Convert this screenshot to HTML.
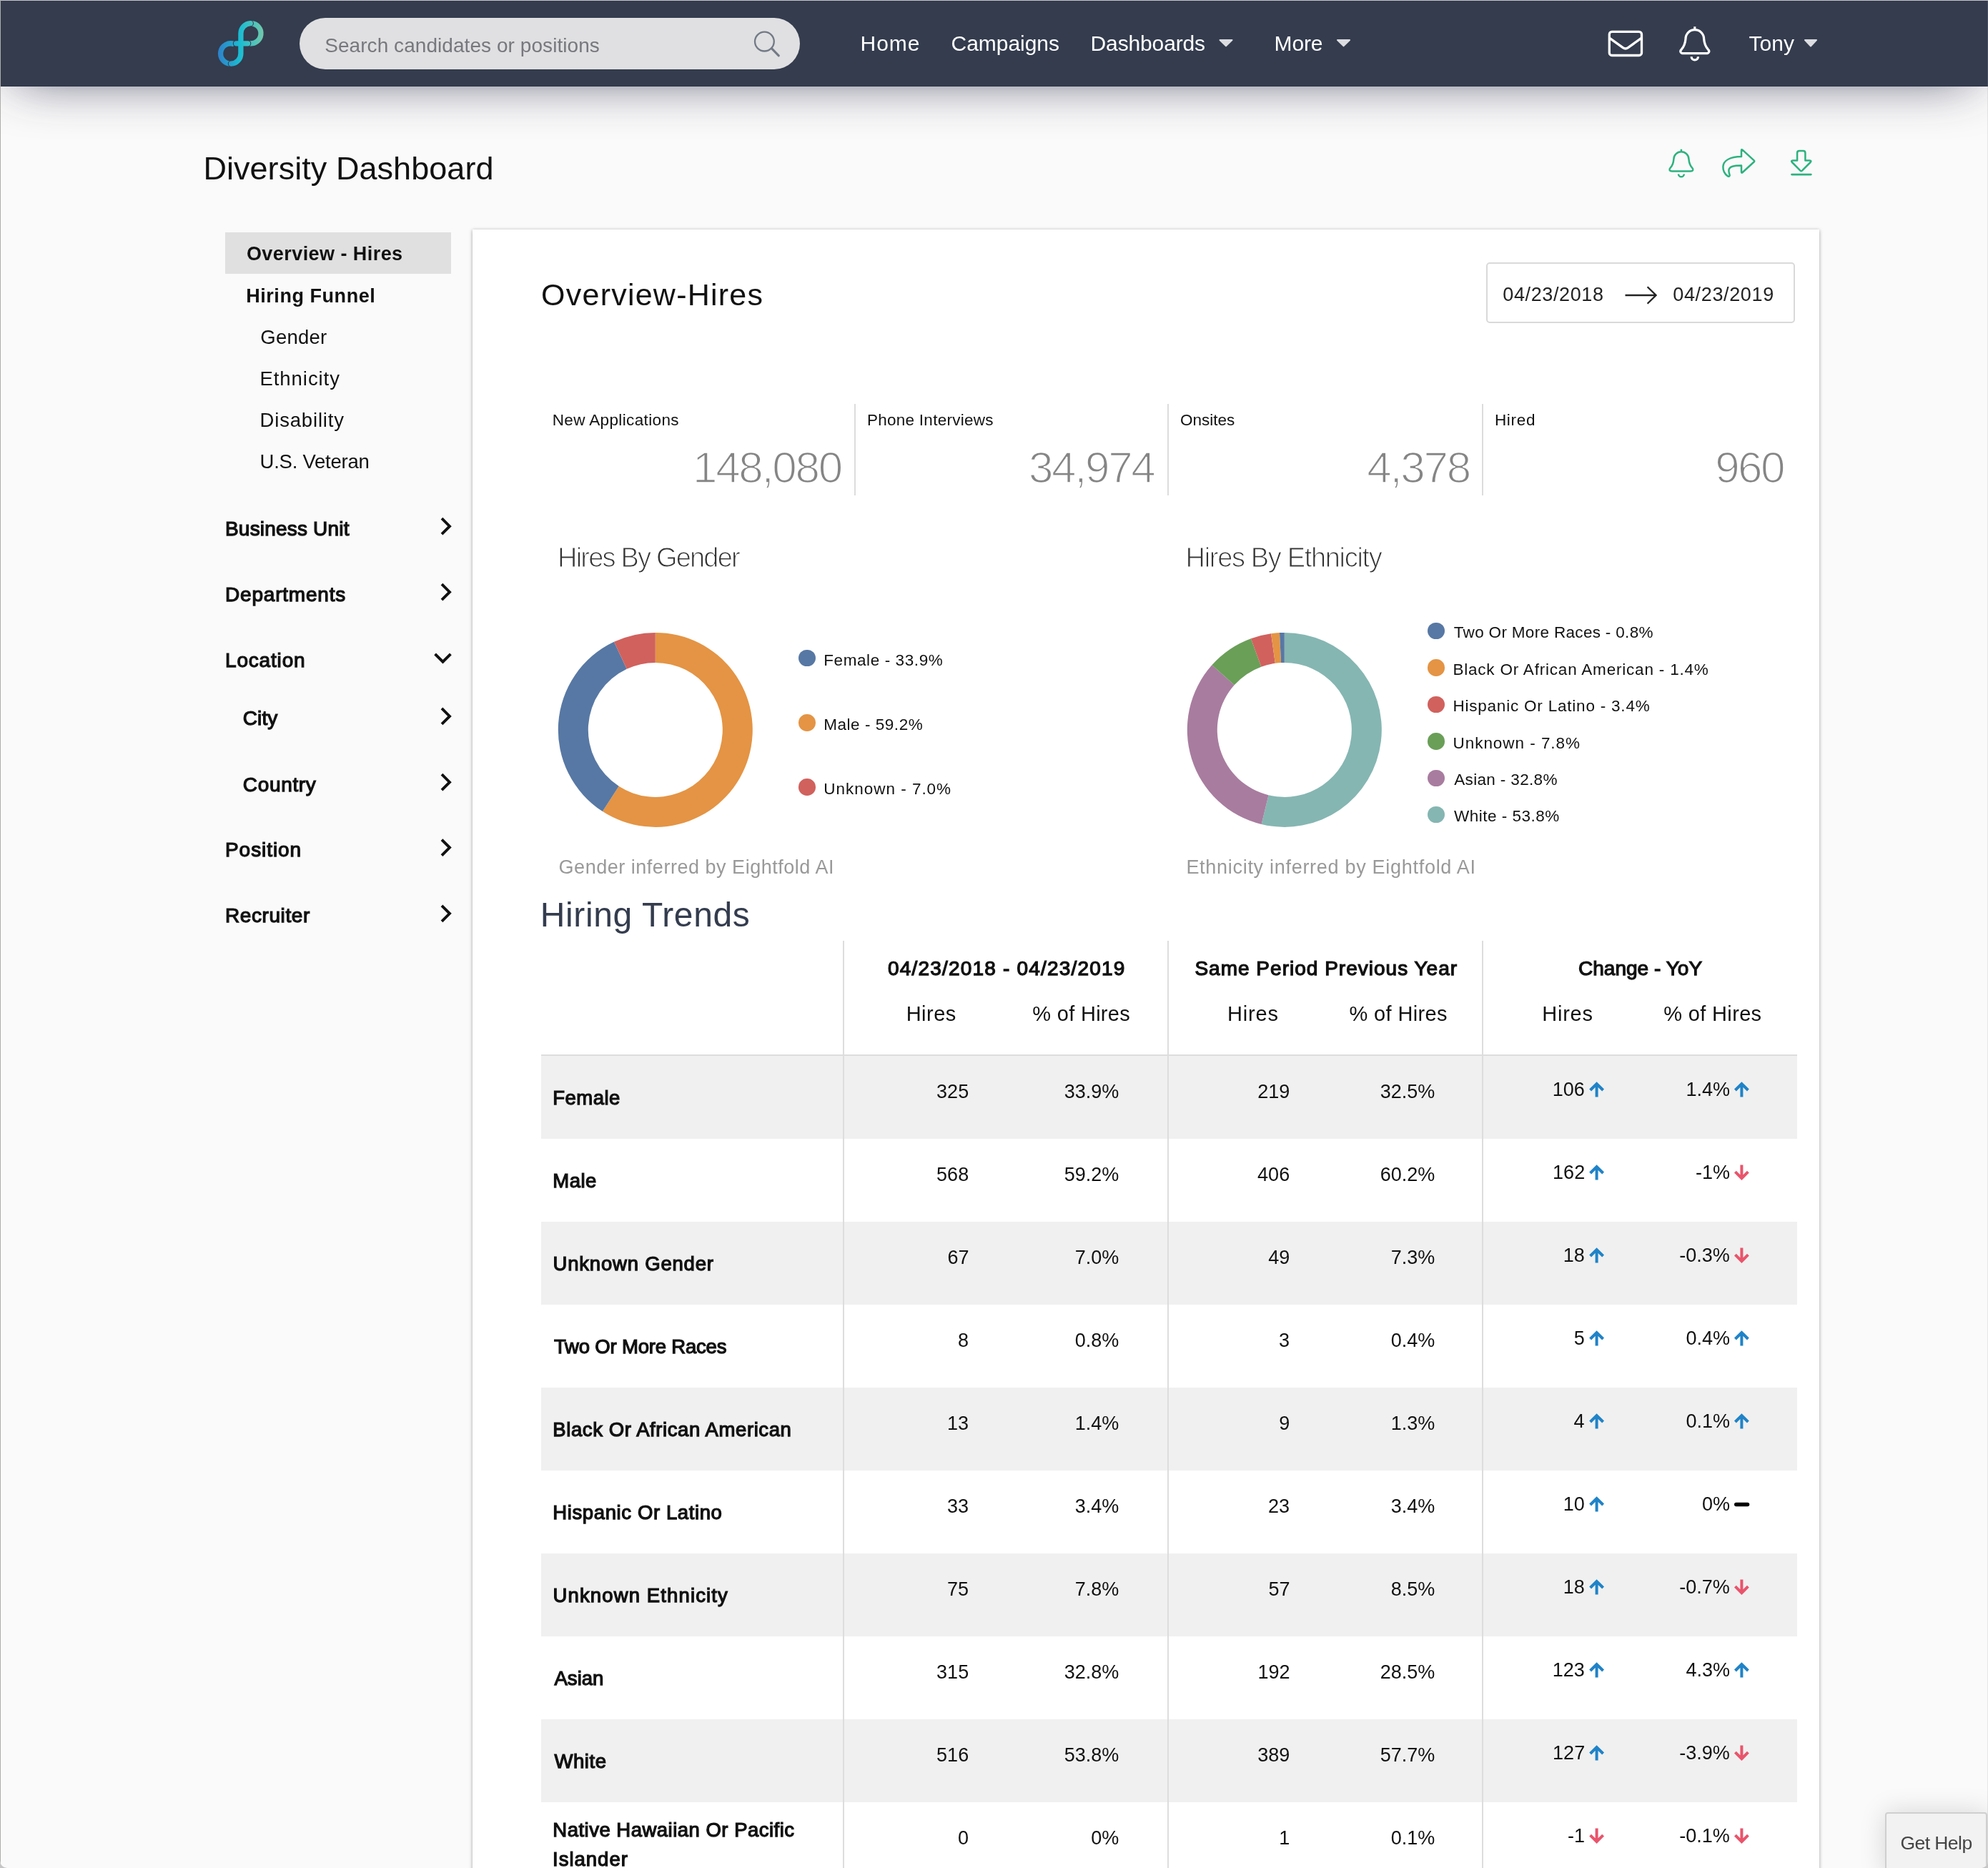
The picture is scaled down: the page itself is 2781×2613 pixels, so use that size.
<!DOCTYPE html>
<html lang="en"><head><meta charset="utf-8"><title>Diversity Dashboard</title>
<style>
html,body{margin:0;padding:0}
body{width:2781px;height:2613px;overflow:hidden;background:#c6c6c6;position:relative;font-family:"Liberation Sans",sans-serif;color:#111}
.t{position:absolute;white-space:nowrap;margin:0;padding:0;font-weight:400}
svg{position:absolute;left:0;top:0;overflow:visible}
header{position:absolute;left:0;top:0;width:2781px;height:121px;box-sizing:border-box;border-bottom:1px solid #2d3447;background:#343c4e;box-shadow:0 10px 73px -24px rgba(38,38,70,.87);z-index:5}
.search{position:absolute;left:419px;top:25px;width:700px;height:72px;border-radius:36px;background:#e0e0e2}
nav a{color:#fff;text-decoration:none}
.frame{position:absolute;z-index:9;pointer-events:none}
aside .sel{position:absolute;left:315px;top:325px;width:316px;height:58px;background:#e0e0e0}
main{position:absolute;left:661px;top:321px;width:1884px;height:2400px;background:#fff;box-shadow:0 1px 5px rgba(0,0,0,.36)}
.vdiv{position:absolute;width:2px;background:#dcdcdc}
.datebox{position:absolute;box-sizing:border-box;border:2px solid #d9d9d9;border-radius:5px;background:#fff}
table{border-collapse:collapse;table-layout:fixed}
td,th{padding:0;border:0}
tbody tr{height:116px}
tbody tr:nth-child(odd){background:#f0f0f0}
tbody tr:first-child{height:117px}
.bl{border-left:2px solid #ddd}
thead tr.h2 th{border-bottom:2px solid #ddd}
.dot{position:absolute;width:23.5px;height:23.5px;border-radius:50%}
.help{position:absolute;left:2637px;top:2535px;width:143px;height:90px;box-sizing:border-box;border:2px solid #cfcfcf;border-radius:4px;background:#f2f2f2;box-shadow:0 0 36px rgba(0,0,0,.15);z-index:6}
#app{position:absolute;left:0;top:0;width:2781px;height:2613px;will-change:transform;overflow:hidden;background:#fafafa;border-radius:0 0 10px 10px}
</style></head><body><div id="app">

<header>
<svg width="85" height="85" viewBox="0 0 85 85" style="left:295px;top:20px"><defs><linearGradient id="lg" gradientUnits="userSpaceOnUse" x1="9" y1="0" x2="74" y2="0"><stop offset="0" stop-color="#2f7fc9"/><stop offset=".5" stop-color="#1bbdd1"/><stop offset="1" stop-color="#74c8aa"/></linearGradient></defs><g fill="none" stroke="url(#lg)" stroke-width="7.3"><path d="M32.54,41.70A14.15,14.15 0 1 0 27.21,69.14"/><path d="M57.23,12.75A14.1,14.1 0 1 1 53.55,40.69"/><path d="M28.44,69.13A14.15,14.15 0 0 0 41.87,55L41.9,26.8A14.1,14.1 0 0 1 55.26,12.72M35.5,40.85L51.6,40.85" stroke="#343c4e" stroke-width="9.4" stroke-linecap="round"/><path d="M28.44,69.13A14.15,14.15 0 0 0 41.87,55L41.9,26.8A14.1,14.1 0 0 1 55.26,12.72M35.5,40.85L51.6,40.85" stroke-linecap="round"/></g></svg>
<div class="search"></div>
<span class="t" style="left:454.2px;top:46.5px;font-size:28px;line-height:34px;letter-spacing:0.06px;color:#77787d;">Search candidates or positions</span>
<svg width="60" height="60" viewBox="1045 35 60 60" style="left:1045px;top:35px"><g fill="none" stroke="#737a86"><circle cx="1069.4" cy="58.1" r="13.4" stroke-width="2.3"/><path d="M1079.6,67.9L1089.3,77.9" stroke-width="3.1" stroke-linecap="round"/></g></svg>
<nav>
<a class="t" style="left:1203.6px;top:43.1px;font-size:30px;line-height:36px;letter-spacing:0.93px;color:#fff;">Home</a>
<a class="t" style="left:1330.5px;top:43.1px;font-size:30px;line-height:36px;letter-spacing:-0.03px;color:#fff;">Campaigns</a>
<a class="t" style="left:1525.6px;top:43.1px;font-size:30px;line-height:36px;letter-spacing:-0.14px;color:#fff;">Dashboards</a>
<a class="t" style="left:1782.6px;top:43.1px;font-size:30px;line-height:36px;letter-spacing:-0.17px;color:#fff;">More</a>
<a class="t" style="left:2446.4px;top:43.1px;font-size:30px;line-height:36px;letter-spacing:0.10px;color:#fff;">Tony</a>
</nav>
<svg width="2781" height="121" viewBox="0 0 2781 121"><g fill="#dcdde1" stroke="#dcdde1" stroke-width="2" stroke-linejoin="round"><path d="M1706.5,56L1723.5,56L1715.0,64.39999999999999Z"/><path d="M1871.0,56L1888.0,56L1879.5,64.39999999999999Z"/><path d="M2525.0,56L2541.0,56L2533.0,64.6Z"/></g>
<g fill="none" stroke="#fff" stroke-width="3.3" stroke-linejoin="round" stroke-linecap="round"><rect x="2251.3" y="44.4" width="45.2" height="33.1" rx="3.6"/><path d="M2251.8,53.4L2270.6,66.9Q2273.9,69.2 2277.2,66.9L2296,53.4"/></g>
<path d="M2355.00,74.70L2386.60,74.70C2390.60,74.70 2392.10,71.90 2389.60,69.40C2385.40,64.90 2384.10,60.70 2383.60,54.40A12.80,12.80 0 0 0 2358.00,54.40C2357.50,60.70 2356.20,64.90 2352.00,69.40C2349.50,71.90 2351.00,74.70 2355.00,74.70ZM2370.80,37.30L2370.80,41.20M2366.10,79.30A4.70,4.70 0 0 0 2375.50,79.30" fill="none" stroke="#fff" stroke-width="3.2" stroke-linejoin="round"/>
</svg>
</header>
<div class="frame" style="left:0;top:0;width:2781px;height:1px;background:#c9c8ca"></div>
<div class="frame" style="left:0;top:0;width:1px;height:2613px;background:#adadab"></div>
<div class="frame" style="left:2780px;top:1px;width:1px;height:2612px;background:rgba(160,160,160,.22)"></div>
<h1 class="t" style="left:284.4px;top:208.5px;font-size:45px;line-height:54px;letter-spacing:0.05px;color:#111;">Diversity Dashboard</h1>
<svg width="2781" height="300" viewBox="0 0 2781 300">
<path d="M2338.85,239.60L2364.95,239.60C2368.25,239.60 2369.49,237.29 2367.43,235.22C2363.96,231.51 2362.89,228.04 2362.47,222.83A10.57,10.57 0 0 0 2341.33,222.83C2340.91,228.04 2339.84,231.51 2336.37,235.22C2334.31,237.29 2335.55,239.60 2338.85,239.60ZM2351.90,208.71L2351.90,211.93M2348.02,243.40A3.88,3.88 0 0 0 2355.78,243.40" fill="none" stroke="#2db27f" stroke-width="2.5" stroke-linejoin="round"/>
<path fill="none" stroke="#2db27f" stroke-width="2.5" stroke-linejoin="round" d="M2436,219L2436,210.5Q2436,208.3 2437.8,209.9L2453.6,224.3Q2454.7,225.4 2453.6,226.5L2437.8,241Q2436,242.6 2436,240.3L2436,231.6C2426,231.6 2419,232.5 2418.4,238C2418.1,241 2419.5,243.6 2419.7,245.3Q2419.2,247.6 2417,246.4C2412,243 2410.2,238 2410.4,233C2411,224 2421,219.3 2436,219Z"/>
<path fill="none" stroke="#2db27f" stroke-width="2.5" stroke-linejoin="round" d="M2514.1,224.4L2514.1,214Q2514.1,211.1 2517,211.1L2522.5,211.1Q2525.4,211.1 2525.4,214L2525.4,224.4L2531.5,224.4Q2534.6,224.6 2532.6,227L2521,238.6Q2519.7,239.8 2518.4,238.6L2506.9,227Q2504.9,224.6 2508,224.4Z"/>
<path fill="none" stroke="#2db27f" stroke-width="2.9" stroke-linecap="round" d="M2506.6,244.1L2533.3,244.1"/>
</svg>
<aside><div class="sel"></div>
<span class="t" style="left:344.9px;top:339.3px;font-size:27px;line-height:32px;letter-spacing:0.44px;font-weight:700;">Overview - Hires</span>
<span class="t" style="left:344.2px;top:397.5px;font-size:27px;line-height:32px;letter-spacing:0.55px;font-weight:700;">Hiring Funnel</span>
<span class="t" style="left:364.3px;top:455.0px;font-size:27.5px;line-height:33px;letter-spacing:0.22px;">Gender</span>
<span class="t" style="left:363.5px;top:512.8px;font-size:27.5px;line-height:33px;letter-spacing:0.94px;">Ethnicity</span>
<span class="t" style="left:363.5px;top:571.3px;font-size:27.5px;line-height:33px;letter-spacing:0.83px;">Disability</span>
<span class="t" style="left:363.6px;top:629.0px;font-size:27.5px;line-height:33px;letter-spacing:-0.25px;">U.S. Veteran</span>
<span class="t" style="left:315.0px;top:722.5px;font-size:28px;line-height:34px;letter-spacing:0.19px;-webkit-text-stroke:1.25px #111;">Business Unit</span>
<span class="t" style="left:315.0px;top:814.5px;font-size:28px;line-height:34px;letter-spacing:0.80px;-webkit-text-stroke:1.25px #111;">Departments</span>
<span class="t" style="left:315.0px;top:906.5px;font-size:28px;line-height:34px;letter-spacing:0.82px;-webkit-text-stroke:1.25px #111;">Location</span>
<span class="t" style="left:339.8px;top:988.2px;font-size:28px;line-height:34px;letter-spacing:0.10px;-webkit-text-stroke:1.25px #111;">City</span>
<span class="t" style="left:339.8px;top:1080.5px;font-size:28px;line-height:34px;letter-spacing:0.67px;-webkit-text-stroke:1.25px #111;">Country</span>
<span class="t" style="left:315.0px;top:1171.9px;font-size:28px;line-height:34px;letter-spacing:0.94px;-webkit-text-stroke:1.25px #111;">Position</span>
<span class="t" style="left:315.0px;top:1264.1px;font-size:28px;line-height:34px;letter-spacing:0.58px;-webkit-text-stroke:1.25px #111;">Recruiter</span>
<svg width="700" height="1400" viewBox="0 0 700 1400"><path fill="none" stroke="#111" stroke-width="3.9" d="M618,725.2L629,736.2L618,747.2M618,817.2L629,828.2L618,839.2M608.6,914.8L619.5,925.7L630.4,914.8M618,990.9L629,1001.9L618,1012.9M618,1083.2L629,1094.2L618,1105.2M618,1174.6L629,1185.6L618,1196.6M618,1266.8L629,1277.8L618,1288.8"/></svg>
</aside>
<main>
<h2 class="t" style="left:96.1px;top:64.8px;font-size:43px;line-height:52px;letter-spacing:1.23px;color:#111;">Overview-Hires</h2>
<div class="datebox" style="left:1418px;top:46px;width:432px;height:85px"></div>
<span class="t" style="left:1441.3px;top:75.0px;font-size:27px;line-height:32px;letter-spacing:0.62px;color:#222;">04/23/2018</span>
<span class="t" style="left:1679.3px;top:75.0px;font-size:27px;line-height:32px;letter-spacing:0.64px;color:#222;">04/23/2019</span>
<svg width="1884" height="200" viewBox="661 321 1884 200"><path fill="none" stroke="#222" stroke-width="2.3" d="M2273.5,413L2316,413M2304.6,401.3L2316.6,413L2304.6,424.7"/></svg>
<div class="vdiv" style="left:534px;top:244px;height:128px"></div>
<div class="vdiv" style="left:972px;top:244px;height:128px"></div>
<div class="vdiv" style="left:1412px;top:244px;height:128px"></div>
<span class="t" style="left:111.7px;top:253.0px;font-size:22.5px;line-height:27px;letter-spacing:0.37px;color:#111;">New Applications</span>
<span class="t light" style="left:308.1px;top:296.0px;font-size:62px;line-height:74px;letter-spacing:-2.35px;color:#858585;-webkit-text-stroke:1.7px #fff;">148,080</span>
<span class="t" style="left:551.9px;top:253.0px;font-size:22.5px;line-height:27px;letter-spacing:0.27px;color:#111;">Phone Interviews</span>
<span class="t light" style="left:778.0px;top:296.0px;font-size:62px;line-height:74px;letter-spacing:-2.38px;color:#858585;-webkit-text-stroke:1.7px #fff;">34,974</span>
<span class="t" style="left:990.0px;top:253.0px;font-size:22.5px;line-height:27px;color:#111;">Onsites</span>
<span class="t light" style="left:1251.3px;top:296.0px;font-size:62px;line-height:74px;letter-spacing:-2.32px;color:#858585;-webkit-text-stroke:1.7px #fff;">4,378</span>
<span class="t" style="left:1429.9px;top:253.0px;font-size:22.5px;line-height:27px;letter-spacing:0.70px;color:#111;">Hired</span>
<span class="t light" style="left:1738.2px;top:296.0px;font-size:62px;line-height:74px;letter-spacing:-2.63px;color:#858585;-webkit-text-stroke:1.7px #fff;">960</span>
<h3 class="t" style="left:119.0px;top:436.4px;font-size:38px;line-height:46px;letter-spacing:-1.80px;color:#333;-webkit-text-stroke:1.1px #fff;">Hires By Gender</h3>
<h3 class="t" style="left:997.6px;top:436.4px;font-size:38px;line-height:46px;letter-spacing:-1.33px;color:#333;-webkit-text-stroke:1.1px #fff;">Hires By Ethnicity</h3>
<svg width="1884" height="1000" viewBox="661 321 1884 1000">
<path fill="#e49444" d="M916.80,884.90A136,136 0 1 1 842.91,1135.08L865.73,1099.82A94,94 0 1 0 916.80,926.90Z"/><path fill="#5778a4" d="M842.91,1135.08A136,136 0 0 1 858.95,897.82L876.81,935.83A94,94 0 0 0 865.73,1099.82Z"/><path fill="#d1615d" d="M858.95,897.82A136,136 0 0 1 916.80,884.90L916.80,926.90A94,94 0 0 0 876.81,935.83Z"/>
<path fill="#85b6b2" d="M1796.80,884.90A136,136 0 1 1 1764.64,1153.04L1774.57,1112.23A94,94 0 1 0 1796.80,926.90Z"/><path fill="#a87c9f" d="M1764.64,1153.04A136,136 0 0 1 1695.35,930.32L1726.68,958.29A94,94 0 0 0 1774.57,1112.23Z"/><path fill="#6a9f58" d="M1695.35,930.32A136,136 0 0 1 1749.93,893.23L1764.40,932.66A94,94 0 0 0 1726.68,958.29Z"/><path fill="#d1615d" d="M1749.93,893.23A136,136 0 0 1 1778.06,886.20L1783.85,927.80A94,94 0 0 0 1764.40,932.66Z"/><path fill="#e49444" d="M1778.06,886.20A136,136 0 0 1 1789.97,885.07L1792.08,927.02A94,94 0 0 0 1783.85,927.80Z"/><path fill="#5778a4" d="M1789.97,885.07A136,136 0 0 1 1796.80,884.90L1796.80,926.90A94,94 0 0 0 1792.08,927.02Z"/>
</svg>
<span class="dot" style="left:456.2px;top:587.9px;background:#5778a4"></span>
<span class="t" style="left:491.2px;top:589.0px;font-size:22.5px;line-height:27px;letter-spacing:0.60px;color:#111;">Female - 33.9%</span>
<span class="dot" style="left:456.2px;top:678.2px;background:#e49444"></span>
<span class="t" style="left:491.2px;top:679.4px;font-size:22.5px;line-height:27px;letter-spacing:0.54px;color:#111;">Male - 59.2%</span>
<span class="dot" style="left:456.2px;top:768.2px;background:#d1615d"></span>
<span class="t" style="left:491.3px;top:769.4px;font-size:22.5px;line-height:27px;letter-spacing:0.98px;color:#111;">Unknown - 7.0%</span>
<span class="dot" style="left:1336.2px;top:549.9px;background:#5778a4"></span>
<span class="t" style="left:1372.8px;top:550.4px;font-size:22.5px;line-height:27px;letter-spacing:0.32px;color:#111;">Two Or More Races - 0.8%</span>
<span class="dot" style="left:1336.2px;top:601.2px;background:#e49444"></span>
<span class="t" style="left:1371.4px;top:601.8px;font-size:22.5px;line-height:27px;letter-spacing:0.80px;color:#111;">Black Or African American - 1.4%</span>
<span class="dot" style="left:1336.2px;top:652.6px;background:#d1615d"></span>
<span class="t" style="left:1371.4px;top:653.2px;font-size:22.5px;line-height:27px;letter-spacing:0.79px;color:#111;">Hispanic Or Latino - 3.4%</span>
<span class="dot" style="left:1336.2px;top:704.0px;background:#6a9f58"></span>
<span class="t" style="left:1371.5px;top:704.6px;font-size:22.5px;line-height:27px;letter-spacing:0.96px;color:#111;">Unknown - 7.8%</span>
<span class="dot" style="left:1336.2px;top:755.5px;background:#a87c9f"></span>
<span class="t" style="left:1373.2px;top:756.0px;font-size:22.5px;line-height:27px;letter-spacing:0.35px;color:#111;">Asian - 32.8%</span>
<span class="dot" style="left:1336.2px;top:806.8px;background:#85b6b2"></span>
<span class="t" style="left:1373.1px;top:807.4px;font-size:22.5px;line-height:27px;letter-spacing:0.48px;color:#111;">White - 53.8%</span>
<span class="t" style="left:120.6px;top:876.0px;font-size:27px;line-height:32px;letter-spacing:0.52px;color:#999;">Gender inferred by Eightfold AI</span>
<span class="t" style="left:998.4px;top:876.0px;font-size:27px;line-height:32px;letter-spacing:0.71px;color:#999;">Ethnicity inferred by Eightfold AI</span>
<h2 class="t" style="left:94.7px;top:930.0px;font-size:48px;line-height:58px;letter-spacing:0.64px;color:#343c4e;">Hiring Trends</h2>
<table style="margin-left:96px;margin-top:995px;width:1757px"><colgroup><col style="width:423px"><col style="width:227px"><col style="width:227px"><col style="width:220px"><col style="width:220px"><col style="width:220px"><col style="width:220px"></colgroup>
<thead><tr class="h1" style="height:80px"><th></th>
<th colspan="2" class="bl"><span class="t" style="left:581.0px;top:1017.0px;font-size:28px;line-height:34px;letter-spacing:1.19px;-webkit-text-stroke:1.25px #111;color:#111;">04/23/2018 - 04/23/2019</span></th>
<th colspan="2" class="bl"><span class="t" style="left:1010.4px;top:1017.0px;font-size:28px;line-height:34px;letter-spacing:1.01px;-webkit-text-stroke:1.25px #111;color:#111;">Same Period Previous Year</span></th>
<th colspan="2" class="bl"><span class="t" style="left:1546.9px;top:1017.0px;font-size:28px;line-height:34px;letter-spacing:0.04px;-webkit-text-stroke:1.25px #111;color:#111;">Change - YoY</span></th>
</tr><tr class="h2" style="height:80px"><th></th>
<th class="bl"><span class="t" style="left:606.7px;top:1080.1px;font-size:29px;line-height:35px;letter-spacing:0.48px;color:#111;">Hires</span></th>
<th><span class="t" style="left:783.3px;top:1080.1px;font-size:29px;line-height:35px;letter-spacing:0.30px;color:#111;">% of Hires</span></th>
<th class="bl"><span class="t" style="left:1056.0px;top:1080.1px;font-size:29px;line-height:35px;letter-spacing:0.83px;color:#111;">Hires</span></th>
<th><span class="t" style="left:1226.6px;top:1080.1px;font-size:29px;line-height:35px;letter-spacing:0.34px;color:#111;">% of Hires</span></th>
<th class="bl"><span class="t" style="left:1496.2px;top:1080.1px;font-size:29px;line-height:35px;letter-spacing:0.78px;color:#111;">Hires</span></th>
<th><span class="t" style="left:1666.3px;top:1080.1px;font-size:29px;line-height:35px;letter-spacing:0.34px;color:#111;">% of Hires</span></th>
</tr></thead><tbody>
<tr><th scope="row">
<span class="t" style="left:112.3px;top:1197.8px;font-size:27.5px;line-height:33px;letter-spacing:0.47px;-webkit-text-stroke:1.25px #111;color:#111;">Female</span>
</th>
<td class="bl"><span class="t" style="left:649.1px;top:1189.8px;font-size:27px;line-height:32px;color:#111;">325</span></td>
<td><span class="t" style="left:827.7px;top:1189.8px;font-size:27px;line-height:32px;color:#111;">33.9%</span></td>
<td class="bl"><span class="t" style="left:1098.3px;top:1189.8px;font-size:27px;line-height:32px;color:#111;">219</span></td>
<td><span class="t" style="left:1269.7px;top:1189.8px;font-size:27px;line-height:32px;color:#111;">32.5%</span></td>
<td class="bl"><span class="t" style="left:1510.8px;top:1187.3px;font-size:27px;line-height:32px;color:#111;">106</span></td>
<td><span class="t" style="left:1697.4px;top:1187.3px;font-size:27px;line-height:32px;color:#111;">1.4%</span></td>
</tr>
<tr><th scope="row">
<span class="t" style="left:112.3px;top:1313.8px;font-size:27.5px;line-height:33px;letter-spacing:0.48px;-webkit-text-stroke:1.25px #111;color:#111;">Male</span>
</th>
<td class="bl"><span class="t" style="left:649.1px;top:1305.8px;font-size:27px;line-height:32px;color:#111;">568</span></td>
<td><span class="t" style="left:827.7px;top:1305.8px;font-size:27px;line-height:32px;color:#111;">59.2%</span></td>
<td class="bl"><span class="t" style="left:1098.1px;top:1305.8px;font-size:27px;line-height:32px;color:#111;">406</span></td>
<td><span class="t" style="left:1269.7px;top:1305.8px;font-size:27px;line-height:32px;color:#111;">60.2%</span></td>
<td class="bl"><span class="t" style="left:1511.1px;top:1303.3px;font-size:27px;line-height:32px;color:#111;">162</span></td>
<td><span class="t" style="left:1710.9px;top:1303.3px;font-size:27px;line-height:32px;color:#111;">-1%</span></td>
</tr>
<tr><th scope="row">
<span class="t" style="left:112.5px;top:1429.8px;font-size:27.5px;line-height:33px;letter-spacing:0.80px;-webkit-text-stroke:1.25px #111;color:#111;">Unknown Gender</span>
</th>
<td class="bl"><span class="t" style="left:664.4px;top:1421.8px;font-size:27px;line-height:32px;color:#111;">67</span></td>
<td><span class="t" style="left:842.7px;top:1421.8px;font-size:27px;line-height:32px;color:#111;">7.0%</span></td>
<td class="bl"><span class="t" style="left:1113.2px;top:1421.8px;font-size:27px;line-height:32px;color:#111;">49</span></td>
<td><span class="t" style="left:1284.7px;top:1421.8px;font-size:27px;line-height:32px;color:#111;">7.3%</span></td>
<td class="bl"><span class="t" style="left:1525.8px;top:1419.3px;font-size:27px;line-height:32px;color:#111;">18</span></td>
<td><span class="t" style="left:1688.3px;top:1419.3px;font-size:27px;line-height:32px;color:#111;">-0.3%</span></td>
</tr>
<tr><th scope="row">
<span class="t" style="left:114.0px;top:1545.8px;font-size:27.5px;line-height:33px;letter-spacing:-0.19px;-webkit-text-stroke:1.25px #111;color:#111;">Two Or More Races</span>
</th>
<td class="bl"><span class="t" style="left:679.1px;top:1537.8px;font-size:27px;line-height:32px;color:#111;">8</span></td>
<td><span class="t" style="left:842.7px;top:1537.8px;font-size:27px;line-height:32px;color:#111;">0.8%</span></td>
<td class="bl"><span class="t" style="left:1128.1px;top:1537.8px;font-size:27px;line-height:32px;color:#111;">3</span></td>
<td><span class="t" style="left:1284.7px;top:1537.8px;font-size:27px;line-height:32px;color:#111;">0.4%</span></td>
<td class="bl"><span class="t" style="left:1540.8px;top:1535.3px;font-size:27px;line-height:32px;color:#111;">5</span></td>
<td><span class="t" style="left:1697.4px;top:1535.3px;font-size:27px;line-height:32px;color:#111;">0.4%</span></td>
</tr>
<tr><th scope="row">
<span class="t" style="left:112.3px;top:1661.8px;font-size:27.5px;line-height:33px;letter-spacing:0.59px;-webkit-text-stroke:1.25px #111;color:#111;">Black Or African American</span>
</th>
<td class="bl"><span class="t" style="left:664.1px;top:1653.8px;font-size:27px;line-height:32px;color:#111;">13</span></td>
<td><span class="t" style="left:842.7px;top:1653.8px;font-size:27px;line-height:32px;color:#111;">1.4%</span></td>
<td class="bl"><span class="t" style="left:1128.2px;top:1653.8px;font-size:27px;line-height:32px;color:#111;">9</span></td>
<td><span class="t" style="left:1284.7px;top:1653.8px;font-size:27px;line-height:32px;color:#111;">1.3%</span></td>
<td class="bl"><span class="t" style="left:1540.5px;top:1651.3px;font-size:27px;line-height:32px;color:#111;">4</span></td>
<td><span class="t" style="left:1697.4px;top:1651.3px;font-size:27px;line-height:32px;color:#111;">0.1%</span></td>
</tr>
<tr><th scope="row">
<span class="t" style="left:112.3px;top:1777.8px;font-size:27.5px;line-height:33px;letter-spacing:0.61px;-webkit-text-stroke:1.25px #111;color:#111;">Hispanic Or Latino</span>
</th>
<td class="bl"><span class="t" style="left:664.1px;top:1769.8px;font-size:27px;line-height:32px;color:#111;">33</span></td>
<td><span class="t" style="left:842.7px;top:1769.8px;font-size:27px;line-height:32px;color:#111;">3.4%</span></td>
<td class="bl"><span class="t" style="left:1113.1px;top:1769.8px;font-size:27px;line-height:32px;color:#111;">23</span></td>
<td><span class="t" style="left:1284.7px;top:1769.8px;font-size:27px;line-height:32px;color:#111;">3.4%</span></td>
<td class="bl"><span class="t" style="left:1525.7px;top:1767.3px;font-size:27px;line-height:32px;color:#111;">10</span></td>
<td><span class="t" style="left:1719.9px;top:1767.3px;font-size:27px;line-height:32px;color:#111;">0%</span></td>
</tr>
<tr><th scope="row">
<span class="t" style="left:112.5px;top:1893.8px;font-size:27.5px;line-height:33px;letter-spacing:1.13px;-webkit-text-stroke:1.25px #111;color:#111;">Unknown Ethnicity</span>
</th>
<td class="bl"><span class="t" style="left:664.1px;top:1885.8px;font-size:27px;line-height:32px;color:#111;">75</span></td>
<td><span class="t" style="left:842.7px;top:1885.8px;font-size:27px;line-height:32px;color:#111;">7.8%</span></td>
<td class="bl"><span class="t" style="left:1113.4px;top:1885.8px;font-size:27px;line-height:32px;color:#111;">57</span></td>
<td><span class="t" style="left:1284.7px;top:1885.8px;font-size:27px;line-height:32px;color:#111;">8.5%</span></td>
<td class="bl"><span class="t" style="left:1525.8px;top:1883.3px;font-size:27px;line-height:32px;color:#111;">18</span></td>
<td><span class="t" style="left:1688.3px;top:1883.3px;font-size:27px;line-height:32px;color:#111;">-0.7%</span></td>
</tr>
<tr><th scope="row">
<span class="t" style="left:114.5px;top:2009.8px;font-size:27.5px;line-height:33px;letter-spacing:0.02px;-webkit-text-stroke:1.25px #111;color:#111;">Asian</span>
</th>
<td class="bl"><span class="t" style="left:649.1px;top:2001.8px;font-size:27px;line-height:32px;color:#111;">315</span></td>
<td><span class="t" style="left:827.7px;top:2001.8px;font-size:27px;line-height:32px;color:#111;">32.8%</span></td>
<td class="bl"><span class="t" style="left:1098.4px;top:2001.8px;font-size:27px;line-height:32px;color:#111;">192</span></td>
<td><span class="t" style="left:1269.7px;top:2001.8px;font-size:27px;line-height:32px;color:#111;">28.5%</span></td>
<td class="bl"><span class="t" style="left:1510.8px;top:1999.3px;font-size:27px;line-height:32px;color:#111;">123</span></td>
<td><span class="t" style="left:1697.4px;top:1999.3px;font-size:27px;line-height:32px;color:#111;">4.3%</span></td>
</tr>
<tr><th scope="row">
<span class="t" style="left:114.4px;top:2125.8px;font-size:27.5px;line-height:33px;letter-spacing:0.57px;-webkit-text-stroke:1.25px #111;color:#111;">White</span>
</th>
<td class="bl"><span class="t" style="left:649.1px;top:2117.8px;font-size:27px;line-height:32px;color:#111;">516</span></td>
<td><span class="t" style="left:827.7px;top:2117.8px;font-size:27px;line-height:32px;color:#111;">53.8%</span></td>
<td class="bl"><span class="t" style="left:1098.3px;top:2117.8px;font-size:27px;line-height:32px;color:#111;">389</span></td>
<td><span class="t" style="left:1269.7px;top:2117.8px;font-size:27px;line-height:32px;color:#111;">57.7%</span></td>
<td class="bl"><span class="t" style="left:1511.1px;top:2115.3px;font-size:27px;line-height:32px;color:#111;">127</span></td>
<td><span class="t" style="left:1688.3px;top:2115.3px;font-size:27px;line-height:32px;color:#111;">-3.9%</span></td>
</tr>
<tr><th scope="row">
<span class="t" style="left:112.3px;top:2221.8px;font-size:27.5px;line-height:33px;letter-spacing:0.49px;-webkit-text-stroke:1.25px #111;color:#111;">Native Hawaiian Or Pacific</span>
<span class="t" style="left:112.0px;top:2262.6px;font-size:27.5px;line-height:33px;letter-spacing:1.00px;-webkit-text-stroke:1.25px #111;color:#111;">Islander</span>
</th>
<td class="bl"><span class="t" style="left:679.0px;top:2233.8px;font-size:27px;line-height:32px;color:#111;">0</span></td>
<td><span class="t" style="left:865.2px;top:2233.8px;font-size:27px;line-height:32px;color:#111;">0%</span></td>
<td class="bl"><span class="t" style="left:1128.2px;top:2233.8px;font-size:27px;line-height:32px;color:#111;">1</span></td>
<td><span class="t" style="left:1284.7px;top:2233.8px;font-size:27px;line-height:32px;color:#111;">0.1%</span></td>
<td class="bl"><span class="t" style="left:1531.9px;top:2231.3px;font-size:27px;line-height:32px;color:#111;">-1</span></td>
<td><span class="t" style="left:1688.3px;top:2231.3px;font-size:27px;line-height:32px;color:#111;">-0.1%</span></td>
</tr>
</tbody></table>
<svg width="1884" height="2292" viewBox="661 321 1884 2292"><g fill="none" stroke-width="4">
<path stroke="#1f83c8" d="M2233.6,1534.6L2233.6,1516.2M2224.6,1525.0L2233.6,1516.0L2242.6,1525.0"/>
<path stroke="#1f83c8" d="M2436.4,1534.6L2436.4,1516.2M2427.4,1525.0L2436.4,1516.0L2445.4,1525.0"/>
<path stroke="#1f83c8" d="M2233.6,1650.6L2233.6,1632.2M2224.6,1641.0L2233.6,1632.0L2242.6,1641.0"/>
<path stroke="#e9546b" d="M2436.4,1629.6L2436.4,1648.0M2427.4,1639.2L2436.4,1648.2L2445.4,1639.2"/>
<path stroke="#1f83c8" d="M2233.6,1766.6L2233.6,1748.2M2224.6,1757.0L2233.6,1748.0L2242.6,1757.0"/>
<path stroke="#e9546b" d="M2436.4,1745.6L2436.4,1764.0M2427.4,1755.2L2436.4,1764.2L2445.4,1755.2"/>
<path stroke="#1f83c8" d="M2233.6,1882.6L2233.6,1864.2M2224.6,1873.0L2233.6,1864.0L2242.6,1873.0"/>
<path stroke="#1f83c8" d="M2436.4,1882.6L2436.4,1864.2M2427.4,1873.0L2436.4,1864.0L2445.4,1873.0"/>
<path stroke="#1f83c8" d="M2233.6,1998.6L2233.6,1980.2M2224.6,1989.0L2233.6,1980.0L2242.6,1989.0"/>
<path stroke="#1f83c8" d="M2436.4,1998.6L2436.4,1980.2M2427.4,1989.0L2436.4,1980.0L2445.4,1989.0"/>
<path stroke="#1f83c8" d="M2233.6,2114.6L2233.6,2096.2M2224.6,2105.0L2233.6,2096.0L2242.6,2105.0"/>
<path stroke="#000" stroke-width="5.6" stroke-linecap="round" d="M2428.8,2104.5L2444.5,2104.5"/>
<path stroke="#1f83c8" d="M2233.6,2230.6L2233.6,2212.2M2224.6,2221.0L2233.6,2212.0L2242.6,2221.0"/>
<path stroke="#e9546b" d="M2436.4,2209.6L2436.4,2228.0M2427.4,2219.2L2436.4,2228.2L2445.4,2219.2"/>
<path stroke="#1f83c8" d="M2233.6,2346.6L2233.6,2328.2M2224.6,2337.0L2233.6,2328.0L2242.6,2337.0"/>
<path stroke="#1f83c8" d="M2436.4,2346.6L2436.4,2328.2M2427.4,2337.0L2436.4,2328.0L2445.4,2337.0"/>
<path stroke="#1f83c8" d="M2233.6,2462.6L2233.6,2444.2M2224.6,2453.0L2233.6,2444.0L2242.6,2453.0"/>
<path stroke="#e9546b" d="M2436.4,2441.6L2436.4,2460.0M2427.4,2451.2L2436.4,2460.2L2445.4,2451.2"/>
<path stroke="#e9546b" d="M2233.6,2557.6L2233.6,2576.0M2224.6,2567.2L2233.6,2576.2L2242.6,2567.2"/>
<path stroke="#e9546b" d="M2436.4,2557.6L2436.4,2576.0M2427.4,2567.2L2436.4,2576.2L2445.4,2567.2"/>
</g></svg>
</main>
<div class="help"></div>
<a class="t" style="left:2658.4px;top:2561.8px;font-size:26.5px;line-height:32px;letter-spacing:-0.55px;color:#444;z-index:7;">Get Help</a>
</div></body></html>
